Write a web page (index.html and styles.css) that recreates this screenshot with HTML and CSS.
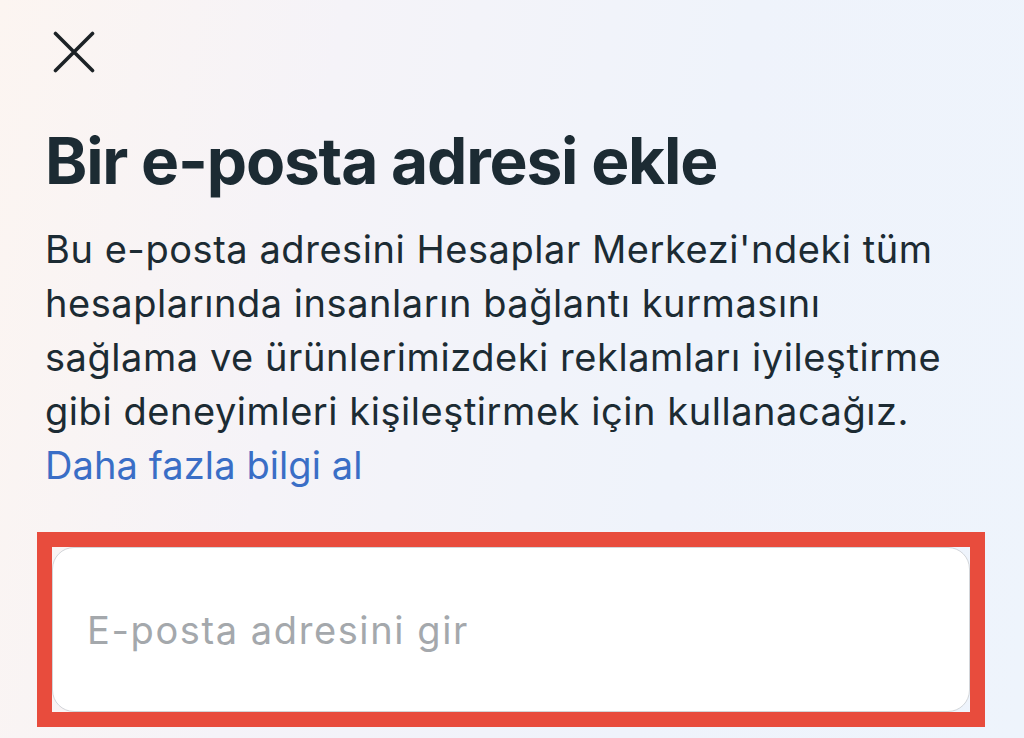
FILE: index.html
```html
<!DOCTYPE html>
<html lang="tr">
<head>
<meta charset="utf-8">
<title>Bir e-posta adresi ekle</title>
<link rel="stylesheet" href="styles.css">
</head>
<body>
<main class="page">
  <button class="close" aria-label="Kapat">
    <svg width="42" height="42" viewBox="0 0 42 42"><path d="M2.5 2.5 L39.5 39.5 M39.5 2.5 L2.5 39.5" stroke="#1c2226" stroke-width="3.6" stroke-linecap="round" fill="none"/></svg>
  </button>
  <h1 class="title">Bir e-posta adresi ekle</h1>
  <p class="desc">Bu e-posta adresini Hesaplar Merkezi'ndeki tüm<br>hesaplarında insanların bağlantı kurmasını<br>sağlama ve ürünlerimizdeki reklamları iyileştirme<br>gibi deneyimleri kişileştirmek için kullanacağız.<br><a class="link" href="#">Daha fazla bilgi al</a></p>
  <div class="highlight">
    <div class="field"><span class="placeholder">E-posta adresini gir</span></div>
  </div>
</main>
</body>
</html>
```

FILE: styles.css
```css
html, body {
  margin: 0;
  height: 100%;
}
body {
  background: linear-gradient(100deg, #fcf5f1 0%, #f5f3f8 30%, #eff3fb 65%, #eef4fc 100%);
  font-family: Inter, "Noto Sans", sans-serif;
  color: #1c2b33;
  overflow: hidden;
}
.page {
  padding: 31px 40px 0 45px;
  display: flex;
  flex-direction: column;
  align-items: flex-start;
}
.close {
  margin: 0 0 0 8px;
  padding: 0;
  border: 0;
  background: none;
  width: 42px;
  height: 42px;
  display: block;
}
.close svg { display: block; }
.title {
  margin: 49px 0 0;
  font-size: 64px;
  line-height: 77px;
  font-weight: 700;
  letter-spacing: -1.2px;
  color: #1c2b33;
}
.desc {
  margin: 23px 0 0;
  font-size: 38px;
  line-height: 54px;
  font-weight: 400;
  letter-spacing: 0.55px;
  white-space: nowrap;
  color: #1c2b33;
}
.link {
  color: #3a6ec6;
  letter-spacing: 0.1px;
  text-decoration: none;
}
.highlight {
  margin: 40px 0 0 -8px;
  width: 918px;
  height: 165px;
  border: 15px solid #e84c3d;
}
.field {
  box-sizing: border-box;
  height: 100%;
  background: #fff;
  border: 1.5px solid #d2d5d9;
  border-radius: 22px;
  display: flex;
  align-items: center;
  padding-left: 34px;
}
.placeholder {
  font-size: 38px;
  letter-spacing: 1.6px;
  color: #a4a8ac;
}
```
